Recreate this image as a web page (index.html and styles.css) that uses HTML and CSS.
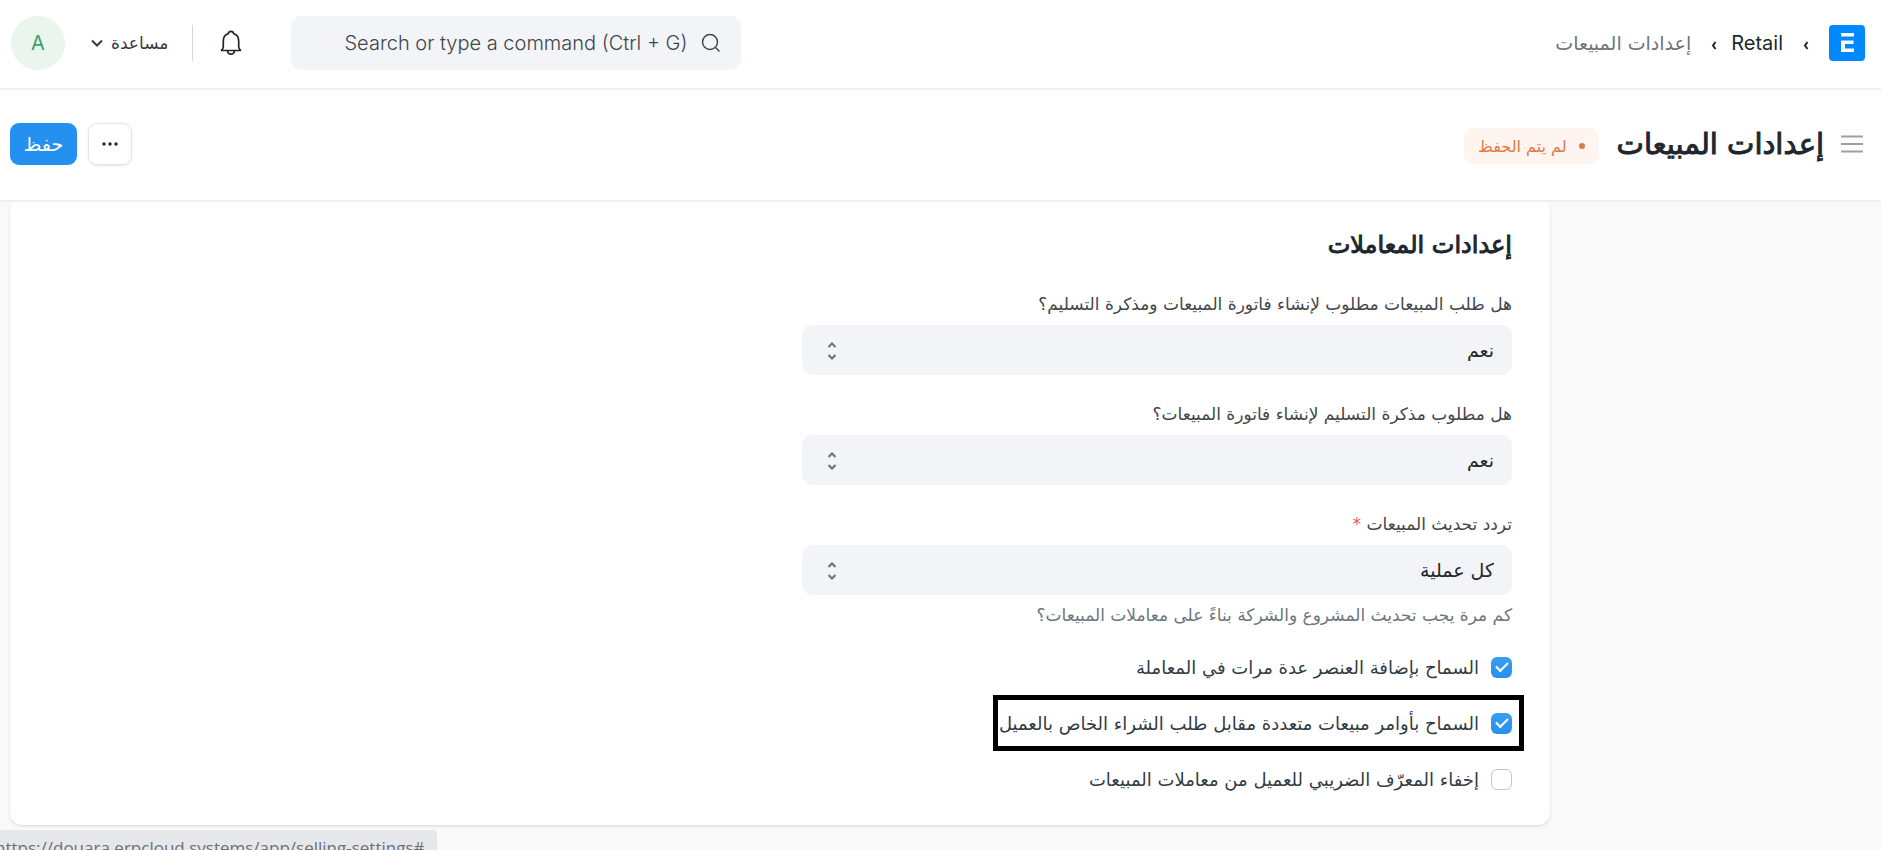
FILE: index.html
```html
<!doctype html>
<html lang="ar" dir="rtl">
	<head>
		<meta charset="utf-8">
		<title>إعدادات المبيعات</title>
		<meta name="viewport" content="width=device-width, initial-scale=1">
		<link rel="stylesheet" href="styles.css">
	</head>

	<body>
		<header class="navbar">
			<a class="logo" href="#" aria-label="ERPNext">
				<svg viewBox="0 0 36 36" width="36" height="36">
					<rect width="36" height="36" rx="4" fill="#0089ff"/>
					<path d="M12 8h13v3.500H12zM12 15.500h12.500V19H16v4.500h9V27H12z" fill="#fff"/>
				</svg>
			</a>
			<nav class="breadcrumbs">
				<svg class="crumb-arrow" viewBox="0 0 6 10" width="6" height="10"><path d="M4.500 2 2 5.500l2.500 3.500"/></svg>
				<a href="#" class="latin">Retail</a>
				<svg class="crumb-arrow" viewBox="0 0 6 10" width="6" height="10"><path d="M4.500 2 2 5.500l2.500 3.500"/></svg>
				<a href="#" class="current">إعدادات المبيعات</a>
			</nav>

			<label class="search">
				<svg viewBox="0 0 20 20" width="20" height="20"><circle cx="9" cy="9" r="7.500"/><path d="m14.500 14.500 4 4"/></svg>
				<input type="text" class="latin" placeholder="Search or type a command (Ctrl + G)" aria-label="Search">
			</label>
			<button class="bell" type="button" aria-label="Notifications">
				<svg viewBox="0 0 22 26" width="22" height="26">
					<path d="M1 20.500h20c-1.600-.8-2.300-2-2.300-3.700V11c0-3.600-1.900-6.300-4.900-7.200C13.500 2.200 12.500 1.300 11 1.300S8.500 2.200 8.200 3.800c-3 .9-4.900 3.600-4.900 7.200v5.800c0 1.700-.7 2.900-2.300 3.700zM7.500 20.800c.3 2.100 1.600 3.400 3.500 3.400s3.200-1.300 3.500-3.400"/>
				</svg>
			</button>
			<button class="help" type="button">
				مساعدة
				<svg viewBox="0 0 12 8" width="12" height="8"><path d="m1 1.500 5 5 5-5"/></svg>
			</button>
			<button class="avatar latin" type="button">A</button>
		</header>

		<div class="page-head">
			<button class="sidebar-toggle" type="button" aria-label="Toggle Sidebar">
				<svg viewBox="0 0 24 20" width="24" height="20"><path d="M1 2.500h22M1 10h22M1 17.500h22"/></svg>
			</button>
			<h1>إعدادات المبيعات</h1>
			<span class="indicator">لم يتم الحفظ</span>
			<button class="btn btn-menu" type="button" aria-label="Menu">
				<svg viewBox="0 0 16 4" width="16" height="4"><circle cx="2" cy="2" r="1.700"/><circle cx="8" cy="2" r="1.700"/><circle cx="14" cy="2" r="1.700"/></svg>
			</button>
			<button class="btn btn-primary" type="button">حفظ</button>
		</div>

		<main>
			<form class="card">
				<h2>إعدادات المعاملات</h2>
				<div class="column">
					<div class="field">
						<label for="so_required">هل طلب المبيعات مطلوب لإنشاء فاتورة المبيعات ومذكرة التسليم؟</label>
						<div class="select">
							<select id="so_required"><option>نعم</option><option>لا</option></select>
							<svg viewBox="0 0 10 20" width="10" height="20"><path d="m1.500 6 3.500-3.500L8.500 6M1.500 14 5 17.500 8.500 14"/></svg>
						</div>
					</div>
					<div class="field">
						<label for="dn_required">هل مطلوب مذكرة التسليم لإنشاء فاتورة المبيعات؟</label>
						<div class="select">
							<select id="dn_required"><option>نعم</option><option>لا</option></select>
							<svg viewBox="0 0 10 20" width="10" height="20"><path d="m1.500 6 3.500-3.500L8.500 6M1.500 14 5 17.500 8.500 14"/></svg>
						</div>
					</div>
					<div class="field">
						<label for="update_frequency">تردد تحديث المبيعات <span class="required">*</span></label>
						<div class="select">
							<select id="update_frequency"><option>كل عملية</option></select>
							<svg viewBox="0 0 10 20" width="10" height="20"><path d="m1.500 6 3.500-3.500L8.500 6M1.500 14 5 17.500 8.500 14"/></svg>
						</div>
						<p class="description">كم مرة يجب تحديث المشروع والشركة بناءً على معاملات المبيعات؟</p>
					</div>
					<div class="checks">
						<label class="check"><input type="checkbox" checked> السماح بإضافة العنصر عدة مرات في المعاملة</label>
						<label class="check highlight"><input type="checkbox" checked> السماح بأوامر مبيعات متعددة مقابل طلب الشراء الخاص بالعميل</label>
						<label class="check"><input type="checkbox"> إخفاء المعرّف الضريبي للعميل من معاملات المبيعات</label>
					</div>
				</div>
			</form>
		</main>

		<div class="link-status" dir="ltr">https://douara.erpcloud.systems/app/selling-settings#</div>
	</body>
</html>
```

FILE: styles.css
```css
* {
	box-sizing: border-box;
}

body {
	margin: 0;
	height: 100vh;
	overflow: hidden;
	font-family: "DejaVu Sans", sans-serif;
	font-size: 17px;
	color: #1f272e;
	background: #f9f9fa;
}

button, input, select {
	font: inherit;
	color: inherit;
}

button {
	display: flex;
	align-items: center;
	justify-content: center;
	padding: 0;
	border: 0;
	background: none;
}

a {
	color: inherit;
	text-decoration: none;
}

svg {
	display: block;
	flex: none;
	fill: none;
	stroke: currentColor;
	stroke-width: 2;
}

.latin {
	font-family: Inter, sans-serif;
	font-size: 20px;
}

.navbar {
	display: flex;
	align-items: center;
	height: 90px;
	padding: 0 16px 2px 11px;
	background: #fff;
	border-bottom: 2px solid #efeff0;
}

.logo svg {
	stroke: none;
}

.breadcrumbs {
	display: flex;
	align-items: center;
	margin-right: 6px;
}

.crumb-arrow {
	margin: 4px 14px 0 20px;
}

.current {
	font-size: 19px;
	color: #6c757d;
}

.search {
	display: flex;
	align-items: center;
	gap: 14px;
	width: 450px;
	height: 54px;
	margin-right: auto;
	padding: 0 20px;
	border-radius: 10px;
	background: #f3f4f7;
	color: #40464c;
}

.search svg {
	stroke-width: 1.5;
}

.search input {
	flex: 1;
	min-width: 0;
	padding: 0;
	border: 0;
	outline: 0;
	background: none;
	font-weight: 300;
}

.search input::placeholder {
	color: #40464c;
	opacity: 1;
}

.bell {
	margin: 0 49px 0 27px;
}

.bell svg {
	stroke-width: 1.7;
}

.help {
	gap: 8px;
	height: 36px;
	margin-left: 26px;
	padding-right: 24px;
	border-right: 1px solid #d1d8dd;
	color: #333c44;
}

.avatar {
	width: 54px;
	height: 54px;
	border-radius: 50%;
	background: #eaf5ee;
	color: #38a160;
}

.page-head {
	position: relative;
	z-index: 1;
	display: flex;
	align-items: center;
	height: 112px;
	padding: 0 17px 2px 10px;
	background: #fff;
	border-bottom: 2px solid #efeff0;
}

.sidebar-toggle {
	color: #999fa6;
}

h1, h2 {
	font-weight: normal;
	-webkit-text-stroke: 1px currentColor;
}

h1 {
	margin: 0 16px 0 18px;
	font-size: 29px;
}

.indicator {
	display: flex;
	align-items: center;
	gap: 12px;
	height: 36px;
	margin-top: 4px;
	padding: 0 14px;
	border-radius: 9px;
	background: #fff5f0;
	color: #e07a48;
	font-size: 16px;
}

.indicator::before {
	content: "";
	width: 6px;
	height: 6px;
	border-radius: 50%;
	background: currentColor;
}

.btn {
	height: 42px;
	border-radius: 9px;
}

.btn-menu {
	width: 44px;
	margin: 0 auto 0 11px;
	border: 1px solid #e2e4e6;
	box-shadow: 0 1px 2px rgba(0,0,0,0.1);
}

.btn-menu svg {
	fill: #1f272e;
	stroke: none;
}

.btn-primary {
	width: 67px;
	background: #2490ef;
	color: #fff;
	font-size: 19px;
}

.card {
	display: grid;
	grid-template-columns: 1fr 1fr;
	column-gap: 44px;
	margin: -4px 331px 0 10px;
	padding: 31px 38px 32px;
	border-radius: 12px;
	background: #fff;
	box-shadow: 0 1px 3px rgba(0,0,0,0.14);
}

h2 {
	grid-column: 1 / -1;
	margin: 0 0 28px;
	font-size: 24px;
	line-height: 32px;
}

.field {
	margin-bottom: 24px;
	color: #40464c;
}

.field > label {
	display: block;
	margin-bottom: 6px;
	line-height: 30px;
}

.required {
	color: #e0606a;
}

.select {
	position: relative;
	color: #6c7075;
}

.select select {
	display: block;
	appearance: none;
	width: 100%;
	height: 50px;
	padding: 0 18px;
	border: 0;
	border-radius: 10px;
	background: #f3f4f7;
	color: #1f272e;
	font-size: 19px;
}

.select svg {
	position: absolute;
	left: 25px;
	top: 16px;
	pointer-events: none;
}

.description {
	margin: 6px 0 0;
	line-height: 28px;
	color: #6c7680;
}

.checks {
	display: grid;
	gap: 28px;
	font-size: 18px;
}

.check {
	position: relative;
	display: flex;
	align-items: center;
	justify-self: start;
	gap: 12px;
	height: 28px;
	color: #333c44;
	white-space: nowrap;
}

.check input {
	appearance: none;
	display: grid;
	place-content: center;
	width: 21px;
	height: 21px;
	margin: 0;
	border: 1px solid #c0c6cc;
	border-radius: 6px;
	background: #fff;
}

.check input:checked {
	border: 0;
	background: linear-gradient(#3a9fee, #2490ef);
}

.check input:checked::before {
	content: "";
	width: 10px;
	height: 5px;
	margin-bottom: 3px;
	border: solid #fff;
	border-width: 0 0 2px 2px;
	transform: rotate(-45deg);
}

.highlight::after {
	content: "";
	position: absolute;
	inset: -14px -12px -14px -6px;
	border: 5px solid #000;
}

.link-status {
	position: fixed;
	left: -5px;
	bottom: -12px;
	z-index: 2;
	padding: 4px 12px 0 0;
	border-radius: 0 4px 0 0;
	background: #e6e7ea;
	color: #6c7075;
	font: 17px/28px "Open Sans", sans-serif;
}
```
